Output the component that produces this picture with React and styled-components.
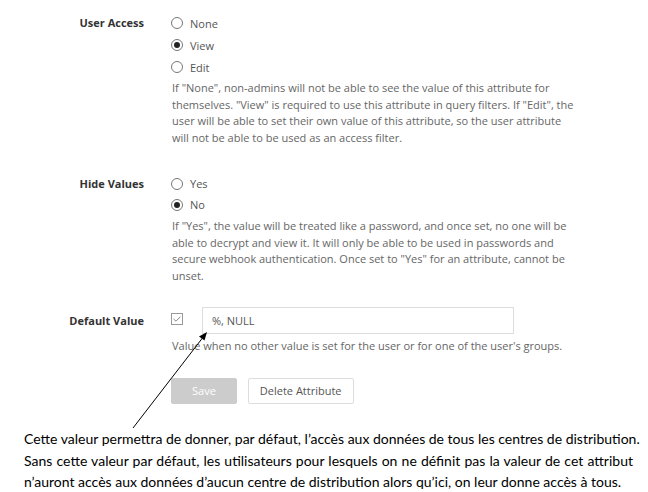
import React from "react";
import styled, { createGlobalStyle } from "styled-components";

const Global = createGlobalStyle`
  html, body { margin: 0; padding: 0; background: #fff; }
  body { width: 648px; height: 492px; overflow: hidden; }
`;

const Page = styled.div`
  position: relative;
  width: 648px;
  height: 492px;
  font-family: "Open Sans", sans-serif;
  font-size: 11px;
  color: #666;
`;

const Form = styled.div`
  display: grid;
  grid-template-columns: 144px 404px;
  column-gap: 27px;
  padding-top: 12px;
`;

const Label = styled.div`
  text-align: right;
  font-weight: 700;
  color: #333;
  line-height: 22px;
  padding-top: ${(p) => p.$top || 0}px;
`;

const Field = styled.div`
  display: flex;
  flex-direction: column;
  margin-bottom: ${(p) => p.$mb || 0}px;
`;

const RadioRow = styled.label`
  display: flex;
  align-items: center;
  gap: 7px;
  height: ${(p) => p.$h || 22}px;
  color: #555;
`;

const RadioCircle = styled.span`
  box-sizing: border-box;
  width: 12px;
  height: 12px;
  border-radius: 50%;
  border: 1px solid #777;
  display: flex;
  align-items: center;
  justify-content: center;
  &::after {
    content: "";
    width: 6px;
    height: 6px;
    border-radius: 50%;
    background: ${(p) => (p.$checked ? "#222" : "transparent")};
  }
`;

const Help = styled.p`
  margin: ${(p) => p.$mt ?? 2}px 0 0 1px;
  line-height: 16.5px;
  color: #666;
  white-space: ${(p) => (p.$nowrap ? "nowrap" : "normal")};
`;

const InputRow = styled.div`
  display: flex;
  align-items: center;
  gap: 19px;
`;

const Check = styled.span`
  box-sizing: border-box;
  width: 12px;
  height: 12px;
  border: 1px solid #999;
  display: flex;
  align-items: center;
  justify-content: center;
  margin-bottom: 3px;
`;

const TextInput = styled.div`
  box-sizing: border-box;
  width: 312px;
  height: 27px;
  border: 1px solid #ddd;
  padding: 0 9px;
  display: flex;
  align-items: center;
  color: #555;
`;

const Buttons = styled.div`
  display: flex;
  gap: 11px;
  margin-top: 23px;
`;

const Button = styled.div`
  box-sizing: border-box;
  height: 26px;
  padding: 0 ${(p) => (p.$primary ? 20 : 11)}px;
  display: flex;
  align-items: center;
  border: 1px solid ${(p) => (p.$primary ? "#ccc" : "#ddd")};
  background: ${(p) => (p.$primary ? "#ccc" : "#fff")};
  color: ${(p) => (p.$primary ? "#fff" : "#555")};
  border-radius: 2px;
`;

const Note = styled.div`
  position: absolute;
  left: 24px;
  top: 428px;
  width: 609px;
  font-family: "Lato", "Liberation Sans", sans-serif;
  font-size: 14px;
  color: #000;
  line-height: 21.5px;
`;

const NoteLine = styled.div`
  white-space: nowrap;
  text-align: ${(p) => (p.$justify ? "justify" : "left")};
  text-align-last: ${(p) => (p.$justify ? "justify" : "left")};
`;

const Arrow = styled.svg`
  position: absolute;
  left: 0;
  top: 0;
  pointer-events: none;
`;

function Radio({ checked, h, children }) {
  return (
    <RadioRow $h={h}>
      <RadioCircle $checked={checked} />
      {children}
    </RadioRow>
  );
}

export default function App() {
  return (
    <Page>
      <Global />
      <Form>
        <Label>User Access</Label>
        <Field $mb={27}>
          <Radio>None</Radio>
          <Radio checked>View</Radio>
          <Radio>Edit</Radio>
          <Help>
            If "None", non-admins will not be able to see the value of this attribute for
            themselves. "View" is required to use this attribute in query filters. If "Edit", the
            user will be able to set their own value of this attribute, so the user attribute
            will not be able to be used as an access filter.
          </Help>
        </Field>

        <Label>Hide Values</Label>
        <Field $mb={23}>
          <Radio h={21}>Yes</Radio>
          <Radio h={21} checked>No</Radio>
          <Help $mt={3}>
            If "Yes", the value will be treated like a password, and once set, no one will be
            able to decrypt and view it. It will only be able to be used in passwords and
            secure webhook authentication. Once set to "Yes" for an attribute, cannot be
            unset.
          </Help>
        </Field>

        <Label $top={3}>Default Value</Label>
        <Field>
          <InputRow>
            <Check>
              <svg width="8" height="6" viewBox="0 0 8 6">
                <path d="M0.5 3 L3 5.2 L7.5 0.6" fill="none" stroke="#888" strokeWidth="1" />
              </svg>
            </Check>
            <TextInput>%, NULL</TextInput>
          </InputRow>
          <Help $mt={4} $nowrap>
            Value when no other value is set for the user or for one of the user's groups.
          </Help>
          <Buttons>
            <Button $primary>Save</Button>
            <Button>Delete Attribute</Button>
          </Buttons>
        </Field>
      </Form>

      <Arrow width="648" height="492" viewBox="0 0 648 492">
        <line x1="133" y1="428" x2="204" y2="336" stroke="#000" strokeWidth="1" />
        <path d="M207 332 L199 336.5 L204.5 340.5 Z" fill="#000" />
      </Arrow>

      <Note>
        <NoteLine $justify>
          Cette valeur permettra de donner, par défaut, l’accès aux données de tous les centres de distribution.
        </NoteLine>
        <NoteLine $justify>
          Sans cette valeur par défaut, les utilisateurs pour lesquels on ne définit pas la valeur de cet attribut
        </NoteLine>
        <NoteLine>
          n’auront accès aux données d’aucun centre de distribution alors qu’ici, on leur donne accès à tous.
        </NoteLine>
      </Note>
    </Page>
  );
}
